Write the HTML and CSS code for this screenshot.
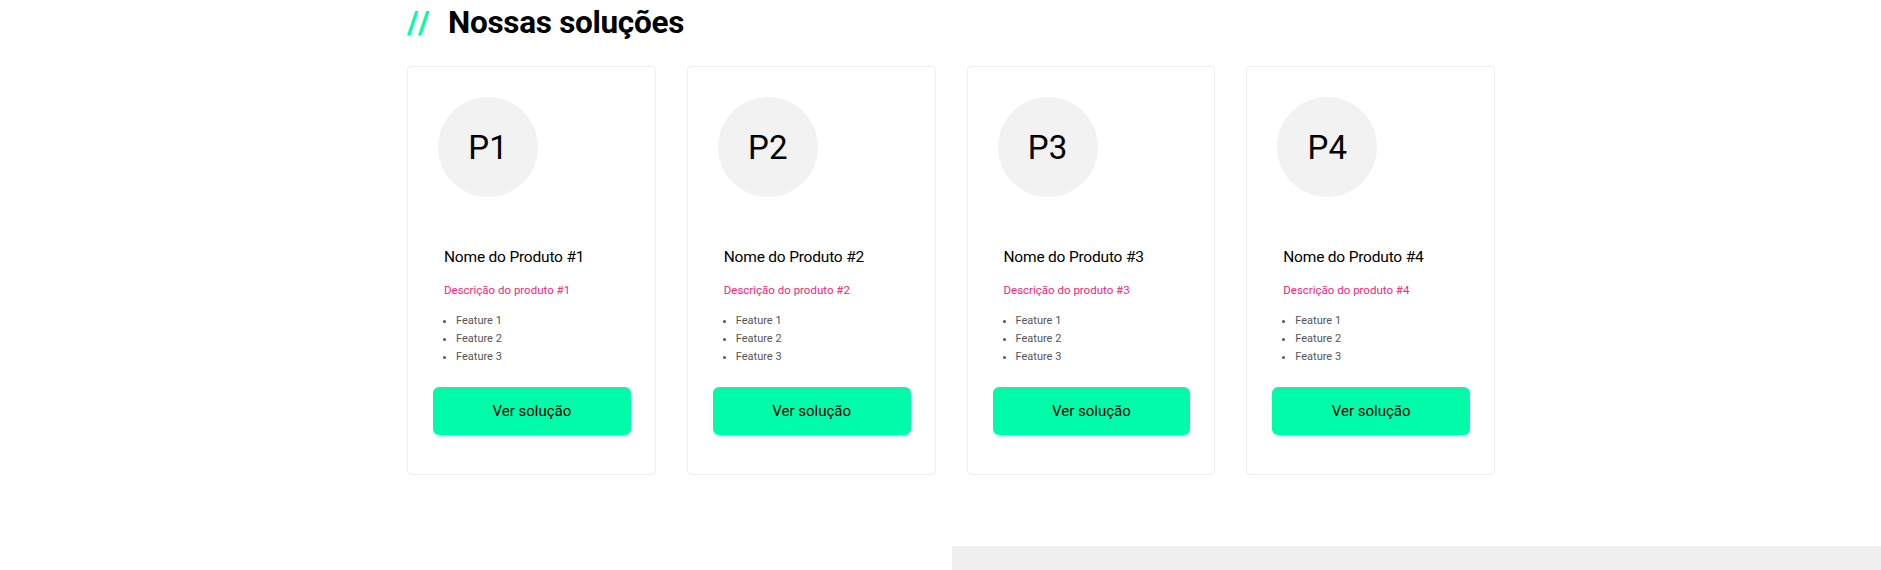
FILE: index.html
```html
<!DOCTYPE html>
<html lang="pt-BR">
<head>
<meta charset="utf-8">
<title>Nossas soluções</title>
<link rel="stylesheet" href="styles.css">
</head>
<body>
<section class="solutions">
  <h2 class="title"><span class="slashes">//</span>Nossas soluções</h2>
  <div class="cards">
    <div class="card">
      <div class="avatar">P1</div>
      <div class="info">
        <h3 class="name">Nome do Produto #1</h3>
        <p class="desc">Descrição do produto #1</p>
      </div>
      <ul class="features"><li>Feature 1</li><li>Feature 2</li><li>Feature 3</li></ul>
      <a class="btn">Ver solução</a>
    </div>
    <div class="card">
      <div class="avatar">P2</div>
      <div class="info">
        <h3 class="name">Nome do Produto #2</h3>
        <p class="desc">Descrição do produto #2</p>
      </div>
      <ul class="features"><li>Feature 1</li><li>Feature 2</li><li>Feature 3</li></ul>
      <a class="btn">Ver solução</a>
    </div>
    <div class="card">
      <div class="avatar">P3</div>
      <div class="info">
        <h3 class="name">Nome do Produto #3</h3>
        <p class="desc">Descrição do produto #3</p>
      </div>
      <ul class="features"><li>Feature 1</li><li>Feature 2</li><li>Feature 3</li></ul>
      <a class="btn">Ver solução</a>
    </div>
    <div class="card">
      <div class="avatar">P4</div>
      <div class="info">
        <h3 class="name">Nome do Produto #4</h3>
        <p class="desc">Descrição do produto #4</p>
      </div>
      <ul class="features"><li>Feature 1</li><li>Feature 2</li><li>Feature 3</li></ul>
      <a class="btn">Ver solução</a>
    </div>
  </div>
</section>
<div class="next-section"></div>
</body>
</html>
```
FILE: styles.css
```css
html, body {
  margin: 0;
  padding: 0;
  background: #fff;
  font-family: Roboto, "Liberation Sans", sans-serif;
  color: #000;
}
.solutions {
  margin-left: 407px;
  width: 1088px;
}
.title {
  margin: 0;
  padding-top: 4px;
  height: 66px;
  box-sizing: border-box;
  font-size: 31.5px;
  line-height: 38px;
  font-weight: 700;
  letter-spacing: -0.3px;
}
.slashes {
  display: inline-block;
  width: 41px;
  color: #00fca8;
  font-weight: 700;
  letter-spacing: 3px;
}
.cards {
  display: flex;
  gap: 31px;
}
.card {
  width: 249px;
  box-sizing: border-box;
  border: 1px solid #eeeeee;
  border-radius: 4px;
  padding: 30px 24px 39px 25px;
  display: flex;
  flex-direction: column;
}
.avatar {
  width: 100px;
  height: 100px;
  border-radius: 50%;
  background: #f2f2f2;
  margin-left: 5px;
  display: flex;
  align-items: center;
  justify-content: center;
  font-size: 33px;
  font-weight: 400;
  color: #000;
}
.info {
  padding-left: 11px;
  margin-top: 49px;
}
.name {
  margin: 0;
  font-size: 15.5px;
  font-weight: 400;
  line-height: 22px;
  letter-spacing: -0.2px;
}
.desc {
  margin: 14px 0 0;
  font-size: 11.5px;
  line-height: 16px;
  color: #f0287a;
}
.features {
  margin: 14px 0 0;
  padding-left: 23px;
  font-size: 11px;
  line-height: 18px;
  color: #555;
}
.btn {
  display: flex;
  align-items: center;
  justify-content: center;
  margin-top: 21px;
  height: 48px;
  background: #00fca8;
  border-radius: 6px;
  font-size: 15px;
  color: #000;
}
.next-section {
  margin-top: 71px;
  margin-left: 952px;
  height: 40px;
  background: #f0f0f0;
}
```
